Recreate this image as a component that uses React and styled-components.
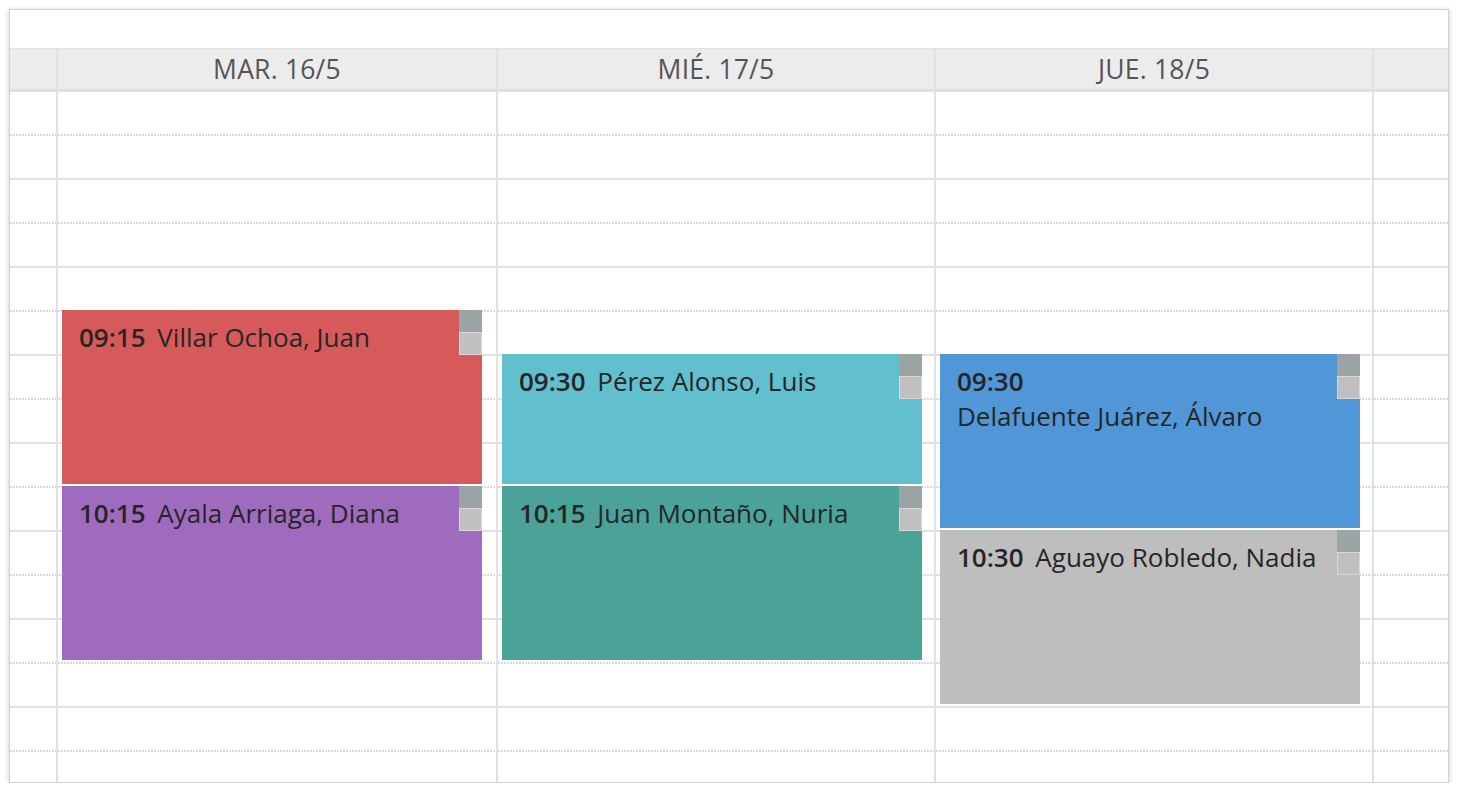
import React from 'react'
import styled, { createGlobalStyle } from 'styled-components'

const GlobalStyle = createGlobalStyle`
    body {
        margin: 0;
        background: #fff;
        font-family: "Open Sans", "Liberation Sans", sans-serif;
    }
`

const SLOT = 44
const START = 8 * 60

const Card = styled.div`
    margin: 9px 0 0 9px;
    width: 1440px;
    height: 774px;
    box-sizing: border-box;
    border: 1px solid #d2d2d2;
    box-shadow: 0 1px 5px rgba(0, 0, 0, 0.22);
    display: flex;
    flex-direction: column;
    overflow: hidden;
`

const TopBar = styled.div`
    height: 38px;
    flex: none;
`

const Columns = styled.div`
    display: grid;
    grid-template-columns: 46px 440px 438px 438px 1fr;
`

const Header = styled(Columns)`
    flex: none;
    height: 44px;
    box-sizing: border-box;
    background: #ececec;
    border-top: 1px solid #e2e2e2;
    border-bottom: 3px solid #dde0e0;
`

const HeadCell = styled.div`
    display: flex;
    align-items: center;
    justify-content: center;
    border-left: ${(p) => (p.$first ? 'none' : '2px solid #e1e1e1')};
    font-size: 26.5px;
    color: #555;
    letter-spacing: 0.2px;
`

const Body = styled(Columns)`
    flex: 1;
    overflow: hidden;
`

const Column = styled.div`
    position: relative;
    border-left: ${(p) => (p.$first ? 'none' : '2px solid #e1e1e1')};
`

const Slot = styled.div`
    height: ${SLOT}px;
    box-sizing: border-box;
    border-bottom: ${(p) => (p.$solid ? '2px solid #e1e1e1' : '2px solid transparent')};
    background: ${(p) =>
        p.$solid
            ? 'none'
            : 'repeating-linear-gradient(to right, #dadada 0 2px, transparent 2px 3px) left bottom / 100% 2px no-repeat'};
    background-origin: border-box;
`

const Event = styled.div`
    position: absolute;
    left: 4px;
    width: 420px;
    box-sizing: border-box;
    padding: 10px 26px 0 17px;
    background: ${(p) => p.$color};
    color: #262626;
    font-size: 26px;
    line-height: 35px;
`

const Time = styled.span`
    font-weight: 600;
    margin-right: 5px;
`

const Name = styled.span`
    display: inline-block;
    white-space: nowrap;
`

const Handles = styled.div`
    position: absolute;
    top: 0;
    right: 0;
    width: 23px;
    display: flex;
    flex-direction: column;
`

const HandleTop = styled.div`
    height: 22px;
    background: #9aa4a4;
`

const HandleBottom = styled.div`
    height: 23px;
    box-sizing: border-box;
    background: #c0c0c0;
    border: 1px solid #d8d8d8;
`

const days = [
    {
        label: 'MAR. 16/5',
        events: [
            { start: '09:15', mins: 60, name: 'Villar Ochoa, Juan', color: '#d75a5b' },
            { start: '10:15', mins: 60, name: 'Ayala Arriaga, Diana', color: '#9e6bbf' },
        ],
    },
    {
        label: 'MIÉ. 17/5',
        events: [
            { start: '09:30', mins: 45, name: 'Pérez Alonso, Luis', color: '#62bfcd' },
            { start: '10:15', mins: 60, name: 'Juan Montaño, Nuria', color: '#4ba299' },
        ],
    },
    {
        label: 'JUE. 18/5',
        events: [
            { start: '09:30', mins: 60, name: 'Delafuente Juárez, Álvaro', color: '#5196d6' },
            { start: '10:30', mins: 60, name: 'Aguayo Robledo, Nadia', color: '#bebebe' },
        ],
    },
]

const slots = Array.from({ length: 16 }, (_, i) => i)

const toMinutes = (t) => {
    const [h, m] = t.split(':').map(Number)
    return h * 60 + m
}

const SlotList = () =>
    slots.map((i) => <Slot key={i} $solid={i % 2 === 1} />)

const App = () => {
    return (
        <>
            <GlobalStyle />
            <Card>
                <TopBar />
                <Header>
                    <HeadCell $first />
                    {days.map((d) => (
                        <HeadCell key={d.label}>{d.label}</HeadCell>
                    ))}
                    <HeadCell />
                </Header>
                <Body>
                    <Column $first>
                        <SlotList />
                    </Column>
                    {days.map((d) => (
                        <Column key={d.label}>
                            <SlotList />
                            {d.events.map((e) => {
                                const top = ((toMinutes(e.start) - START) / 15) * SLOT - 2
                                const height = (e.mins / 15) * SLOT - 2
                                return (
                                    <Event key={e.name} $color={e.color} style={{ top, height }}>
                                        <Time>{e.start}</Time> <Name>{e.name}</Name>
                                        <Handles>
                                            <HandleTop />
                                            <HandleBottom />
                                        </Handles>
                                    </Event>
                                )
                            })}
                        </Column>
                    ))}
                    <Column>
                        <SlotList />
                    </Column>
                </Body>
            </Card>
        </>
    )
}

export default App
